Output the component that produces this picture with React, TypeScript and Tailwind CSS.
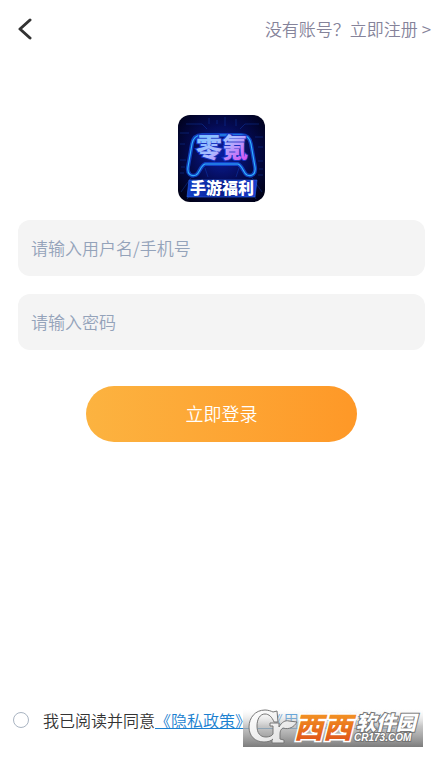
import { useState } from "react";

const fontStack = "font-['Noto_Sans_CJK_SC',sans-serif]";

function AppLogo() {
  return (
    <svg viewBox="0 0 87 87" className="size-[87px] rounded-xl" role="img" aria-label="零氪手游福利">
      <defs>
        <radialGradient id="logoBg" cx="50%" cy="45%" r="65%">
          <stop offset="0" stopColor="#0b1fa0" />
          <stop offset="0.55" stopColor="#050b50" />
          <stop offset="1" stopColor="#01021a" />
        </radialGradient>
        <linearGradient id="logoTitle" x1="0" y1="0" x2="1" y2="1">
          <stop offset="0" stopColor="#62c4ff" />
          <stop offset="0.5" stopColor="#adbcff" />
          <stop offset="1" stopColor="#d93df2" />
        </linearGradient>
        <linearGradient id="logoBanner" x1="0" y1="0" x2="1" y2="0">
          <stop offset="0" stopColor="#1240c8" />
          <stop offset="0.5" stopColor="#0a1c8e" />
          <stop offset="1" stopColor="#1a3fd0" />
        </linearGradient>
      </defs>
      <rect width="87" height="87" fill="url(#logoBg)" />
      <g fill="none" stroke="#1450d8" strokeWidth="0.6" opacity="0.55">
        <path d="M8 9h16l5 5M62 14l5-5h14M2 18h9M85 22h-8M31 3v6M47 2v9M58 4v7M39 5v4" />
        <path d="M2 45h6M3 52h4M2 58h4M80 46h5M81 54h4M80 60h5M2 29h5M80 32h5" />
        <path d="M3 77l12-17M9 84l8-10M84 77L72 60M78 84l-5-10M30 62l-3-9M58 62l3-9" />
      </g>
      <g fill="none" strokeLinejoin="round">
        <path
          d="M24 20c-6 0-9 3-10 9L10 52c-1 7 3 10 8 8 4-2 4-9 9-11h33c5 2 5 9 9 11 5 2 9-1 8-8L73 29c-1-6-4-9-10-9H24Z"
          stroke="#1554e8"
          strokeWidth="4"
          opacity="0.7"
        />
        <path
          d="M24 20c-6 0-9 3-10 9L10 52c-1 7 3 10 8 8 4-2 4-9 9-11h33c5 2 5 9 9 11 5 2 9-1 8-8L73 29c-1-6-4-9-10-9H24Z"
          stroke="#30b0ff"
          strokeWidth="1.2"
        />
      </g>
      <text
        x="44"
        y="42"
        textAnchor="middle"
        fontSize="26"
        fontWeight="900"
        fill="url(#logoTitle)"
        stroke="#1c35c0"
        strokeWidth="2"
        paintOrder="stroke"
      >
        零氪
      </text>
      <path d="M11 65h68l-2 17H9Z" fill="url(#logoBanner)" stroke="#2867ea" strokeWidth="0.6" />
      <text x="44" y="79" textAnchor="middle" fontSize="16" fontWeight="900" fill="#ffffff">
        手游福利
      </text>
    </svg>
  );
}

function SiteBadge() {
  return (
    <svg viewBox="0 0 180 38" className="h-[38px] w-[180px] overflow-visible" role="img" aria-label="西西软件园 CR173.COM">
      <defs>
        <linearGradient id="badgeBg" x1="0" y1="0" x2="0" y2="1">
          <stop offset="0" stopColor="#ffffff" stopOpacity="0.2" />
          <stop offset="0.45" stopColor="#b4b4b4" stopOpacity="0.75" />
          <stop offset="1" stopColor="#7c7c7c" />
        </linearGradient>
        <linearGradient id="badgeOrange" x1="0" y1="0" x2="0" y2="1">
          <stop offset="0" stopColor="#f9a825" />
          <stop offset="1" stopColor="#dd4a18" />
        </linearGradient>
        <linearGradient id="badgeSilver" x1="0" y1="0" x2="1" y2="1">
          <stop offset="0" stopColor="#ffffff" />
          <stop offset="1" stopColor="#dedede" />
        </linearGradient>
      </defs>
      <rect width="180" height="38" fill="url(#badgeBg)" />
      {/* Silver emblem with a leaf on its right arm */}
      <path
        d="M30 3l4-1 1 11h-4C29 8 26 5 22 5c-5 0-8 5-8 12s3 11 9 11c3 0 6-1 7-3V17h-3v-3h9v4c3-5 6-7 10-6l8 1c-3 5-8 8-14 6-2 1-3 3-3 6v5l4 1v3H29v-3l1-1c-2 2-5 3-9 3C12 33 6 27 6 18S12 1 22 1c3 0 6 1 8 2Z"
        fill="url(#badgeSilver)"
        stroke="#777777"
        strokeWidth="1"
        strokeLinejoin="round"
      />
      <g fontWeight="900" fontStyle="italic">
        <text x="51" y="29" fontSize="29" fill="url(#badgeOrange)" stroke="#ffffff" strokeWidth="3" paintOrder="stroke">
          西西
        </text>
        <text x="113" y="21" fontSize="20" fill="#ffffff" stroke="#757575" strokeWidth="2" paintOrder="stroke">
          软件园
        </text>
        <text
          x="111"
          y="32"
          fontSize="10"
          fill="#ffffff"
          stroke="#757575"
          strokeWidth="2"
          paintOrder="stroke"
          className="font-['Liberation_Sans',sans-serif]"
        >
          CR173.COM
        </text>
      </g>
    </svg>
  );
}

function App() {
  const [username, setUsername] = useState("");
  const [password, setPassword] = useState("");
  const [agreed, setAgreed] = useState(false);

  return (
    <div className={`flex min-h-screen flex-col bg-white font-[350] ${fontStack}`}>
      {/* Top bar */}
      <header className="flex h-[58px] items-center justify-between pl-4 pr-3">
        <button type="button" aria-label="返回" className="p-0.5">
          <svg viewBox="0 0 14 22" className="h-[22px] w-3.5" fill="none" stroke="#333333" strokeWidth="3" strokeLinecap="round" strokeLinejoin="round">
            <path d="M12 2 2 11l10 9" />
          </svg>
        </button>
        <a href="#register" className="text-[17px] text-[#85839a]">
          没有账号？立即注册 &gt;
        </a>
      </header>

      {/* Login form */}
      <form className="flex flex-col items-center px-[18px] pt-[57px]" onSubmit={(e) => e.preventDefault()}>
        <AppLogo />
        <input
          type="text"
          aria-label="用户名/手机号"
          placeholder="请输入用户名/手机号"
          value={username}
          onChange={(e) => setUsername(e.target.value)}
          className="mt-[18px] h-14 w-full rounded-xl bg-[#f4f4f4] px-[13px] pb-0.5 text-[17px] outline-none placeholder:text-[#94a3ba]"
        />
        <input
          type="password"
          aria-label="密码"
          placeholder="请输入密码"
          value={password}
          onChange={(e) => setPassword(e.target.value)}
          className="mt-[18px] h-14 w-full rounded-xl bg-[#f4f4f4] px-[13px] pb-0.5 text-[17px] outline-none placeholder:text-[#94a3ba]"
        />
        <button
          type="submit"
          className="mt-9 h-14 w-2/3 rounded-full bg-linear-to-r from-[#fcb340] to-[#fe9827] pb-0.5 text-lg text-white"
        >
          立即登录
        </button>
      </form>

      {/* Agreement */}
      <footer className="relative mt-auto flex h-[73px] items-start px-[13px] pt-6">
        <input
          id="agree"
          type="checkbox"
          checked={agreed}
          onChange={(e) => setAgreed(e.target.checked)}
          className="mt-1 mr-3.5 size-4 shrink-0 appearance-none rounded-full border border-[#a9b4c2] checked:bg-[#fe9827]"
        />
        <p className="whitespace-nowrap text-base text-[#333333] [text-spacing-trim:space-all]">
          <label htmlFor="agree">我已阅读并同意</label>
          <a href="#privacy" className="text-[#1a7fd0] underline">《隐私政策》</a>
          <a href="#terms" className="text-[#1a7fd0] underline">、《用户服务协议》</a>
        </p>
        <div className="absolute right-5 bottom-2.5">
          <SiteBadge />
        </div>
      </footer>
    </div>
  );
}

export default App;
